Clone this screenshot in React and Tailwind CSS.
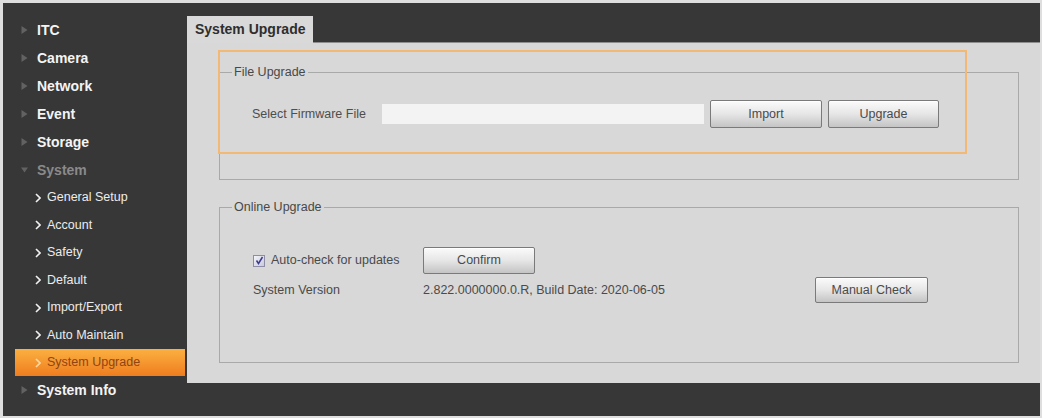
const font = { fontFamily: '"Liberation Sans", Arial, sans-serif' };

const mainItems = ['ITC', 'Camera', 'Network', 'Event', 'Storage'];
const systemItems = ['General Setup', 'Account', 'Safety', 'Default', 'Import/Export', 'Auto Maintain'];

const Caret = ({ down }) => (
  <svg width="7" height="8" viewBox="0 0 7 8" className="shrink-0">
    {down ? <path d="M0 1.5 L7 1.5 L3.5 6.5 Z" fill="#626262" /> : <path d="M0.5 0 L6.5 4 L0.5 8 Z" fill="#626262" />}
  </svg>
);

const Chevron = ({ color = '#f0f0f0' }) => (
  <svg width="6" height="10" viewBox="0 0 6 10" className="shrink-0">
    <path d="M1 1 L5 5 L1 9" fill="none" stroke={color} strokeWidth="1.6" />
  </svg>
);

const Btn = ({ children, className = '' }) => (
  <button className={`border border-[#7a7a7a] rounded-[2px] bg-gradient-to-b from-[#fbfbfb] via-[#e6e6e6] to-[#c4c4c4] text-[12.5px] text-[#4a4a4a] shadow-[inset_0_1px_0_#fff] ${className}`}>
    {children}
  </button>
);

const Sidebar = () => (
  <aside className="w-[184px] shrink-0 pt-[13px] flex flex-col">
    {mainItems.map((t) => (
      <div key={t} className="h-[28px] flex items-center pl-[18px] gap-[9px]">
        <Caret />
        <span className="text-[14px] font-bold text-[#f4f4f4]">{t}</span>
      </div>
    ))}
    <div className="h-[28px] flex items-center pl-[18px] gap-[9px]">
      <Caret down />
      <span className="text-[14px] font-bold text-[#8a8a8a]">System</span>
    </div>
    {systemItems.map((t) => (
      <div key={t} className="h-[27.5px] flex items-center pl-[32px] gap-[6px]">
        <Chevron />
        <span className="text-[12.5px] text-[#ececec]">{t}</span>
      </div>
    ))}
    <div className="h-[27px] ml-[12px] mr-[2px] flex items-center pl-[20px] gap-[6px] bg-gradient-to-b from-[#fbb040] to-[#ee7d1e]">
      <Chevron color="#ffd9a0" />
      <span className="text-[12.5px] text-[#8e4514]">System Upgrade</span>
    </div>
    <div className="h-[28px] flex items-center pl-[18px] gap-[9px]">
      <Caret />
      <span className="text-[14px] font-bold text-[#f4f4f4]">System Info</span>
    </div>
  </aside>
);

const CheckBox = () => (
  <span className="w-[12px] h-[12px] border border-[#8d8da6] bg-gradient-to-br from-[#f4f4fa] to-[#c9c9dc] flex items-center justify-center">
    <svg width="9" height="9" viewBox="0 0 9 9">
      <path d="M1.5 4.5 L3.5 7.5 L7.5 1" fill="none" stroke="#3b3b8f" strokeWidth="1.5" />
    </svg>
  </span>
);

const Group = ({ title, className = '', children }) => (
  <fieldset className={`ml-[32px] w-[800px] border border-[#a9a9a9] ${className}`}>
    <legend className="ml-[12px] px-[2px] text-[12.5px] leading-[14px] text-[#484848]">{title}</legend>
    {children}
  </fieldset>
);

export default function App() {
  return (
    <div style={font} className="w-[1042px] h-[418px] bg-[#dedede] pt-[3px] pl-[3px] pr-[2px] pb-[2px]">
      <div className="h-full bg-[#373737] flex">
        <Sidebar />
        <main className="flex-1 flex flex-col">
          <div className="h-[40px] flex items-end shrink-0">
            <div className="h-[27px] px-[8px] flex items-center bg-[#d9d9d9] text-[14px] font-bold text-[#2e2e2e]">
              System Upgrade
            </div>
            <div className="flex-1 border-b border-[#8e8e8e]" />
          </div>

          <section className="relative h-[340px] bg-[#d8d8d8] pt-[22px]">
            <Group title="File Upgrade" className="h-[115px]">
              <div className="pt-[21px] pl-[32px] flex items-center">
                <span className="w-[130px] text-[12.5px] text-[#4e4e4e]">Select Firmware File</span>
                <div className="w-[322px] h-[20px] bg-[#f3f3f3]" />
                <Btn className="ml-[6px] w-[112px] h-[28px]">Import</Btn>
                <Btn className="ml-[6px] w-[111px] h-[28px]">Upgrade</Btn>
              </div>
            </Group>

            <Group title="Online Upgrade" className="mt-[20px] h-[163px]">
              <div className="pt-[33px] pl-[33px] grid grid-cols-[170px_392px_auto] gap-y-[3px] items-center text-[12.5px] text-[#4a4a4a]">
                <label className="flex items-center gap-[6px]">
                  <CheckBox />
                  <span>Auto-check for updates</span>
                </label>
                <div className="col-span-2">
                  <Btn className="w-[112px] h-[27px]">Confirm</Btn>
                </div>
                <span>System Version</span>
                <span>2.822.0000000.0.R, Build Date: 2020-06-05</span>
                <div>
                  <Btn className="w-[113px] h-[26px]">Manual Check</Btn>
                </div>
              </div>
            </Group>

            {/* highlight frame drawn over the file section */}
            <div className="absolute left-[31px] top-[7px] w-[749px] h-[104px] border-2 border-[#f3b874] pointer-events-none" />
          </section>
        </main>
      </div>
    </div>
  );
}
